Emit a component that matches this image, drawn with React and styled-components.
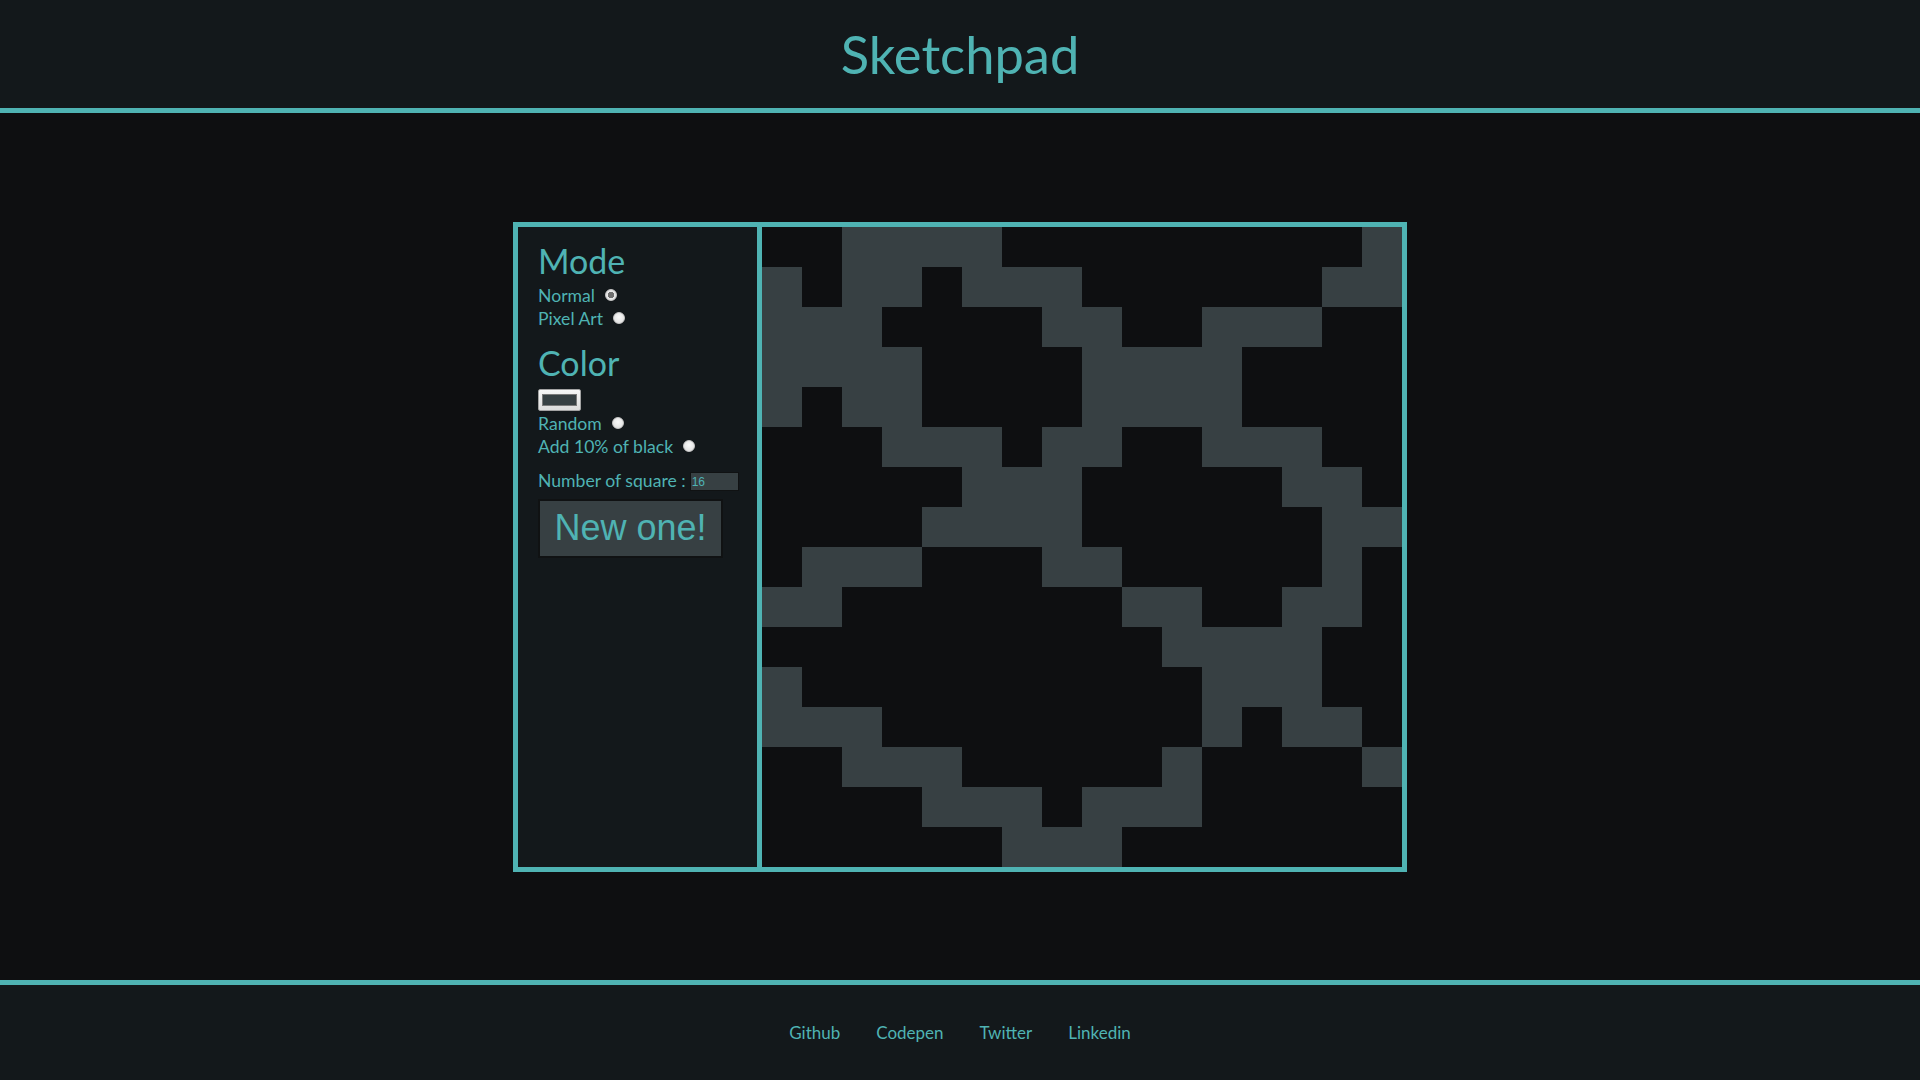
import React from "react";
import styled, { createGlobalStyle } from "styled-components";

const teal = "#4fb3b3";
const dark = "#13181b";
const cell = "#374043";

const GlobalStyle = createGlobalStyle`
    html, body {
        margin: 0;
        padding: 0;
        background: #0e0f11;
        font-family: Lato, "Open Sans", sans-serif;
        color: ${teal};
    }
`;

const Page = styled.div`
    display: flex;
    flex-direction: column;
    min-height: 100vh;
`;

const Header = styled.header`
    height: 108px;
    background: ${dark};
    border-bottom: 5px solid ${teal};
    display: flex;
    align-items: center;
    justify-content: center;
`;

const Title = styled.h1`
    margin: 0;
    font-size: 52.5px;
    font-weight: 400;
    line-height: 1;
    color: ${teal};
`;

const Main = styled.main`
    flex: 1;
    display: flex;
    align-items: center;
    justify-content: center;
`;

const Board = styled.div`
    display: flex;
    border: 5px solid ${teal};
`;

const Panel = styled.aside`
    width: 199px;
    padding: 14px 20px 0;
    background: ${dark};
    border-right: 5px solid ${teal};
`;

const Heading = styled.h2`
    margin: ${props => props.$first ? "0" : "13px 0 0"};
    font-size: 34px;
    font-weight: 400;
    line-height: 40px;
`;

const Options = styled.div`
    margin-top: 3px;
`;

const Option = styled.label`
    display: flex;
    align-items: center;
    height: 23px;
    font-size: 17.6px;
    white-space: nowrap;
`;

const Radio = styled.input.attrs({ type: "radio" })`
    appearance: none;
    -webkit-appearance: none;
    width: 12px;
    height: 12px;
    margin: 0 0 0 10px;
    border-radius: 50%;
    border: 1px solid #c9c9c9;
    background: radial-gradient(circle at 50% 40%, #fafafa 0%, #e4e4e4 70%, #d2d2d2 100%);
    box-sizing: border-box;

    &:checked {
        background: radial-gradient(circle, #6f6f6f 0 3px, #e9e9e9 3.5px, #d6d6d6 100%);
    }
`;

const ColorPick = styled.input.attrs({ type: "color" })`
    display: block;
    margin: 6px 0 1px;
    width: 43px;
    height: 22px;
    padding: 0;
    box-sizing: border-box;
    border: 1px solid #a3a3a3;
    border-radius: 2px;
    background: linear-gradient(#f7f7f7, #dcdcdc);

    &::-webkit-color-swatch-wrapper {
        padding: 4px 3px;
    }
    &::-webkit-color-swatch {
        border: 1px solid #7a7a7a;
        border-radius: 0;
    }
`;

const SizeRow = styled.label`
    display: flex;
    align-items: center;
    height: 23px;
    margin-top: 11px;
    font-size: 17.6px;
    white-space: nowrap;
`;

const SizeInput = styled.input`
    flex-shrink: 0;
    width: 49px;
    height: 19px;
    margin: 3px 0 0 4px;
    padding: 0 1px;
    box-sizing: border-box;
    border: 1px solid #101213;
    background: ${cell};
    color: ${teal};
    font: 12px "Liberation Sans", Arial, sans-serif;
    outline: none;
    -moz-appearance: textfield;

    &::-webkit-inner-spin-button,
    &::-webkit-outer-spin-button {
        -webkit-appearance: none;
        margin: 0;
    }
`;

const NewButton = styled.button`
    display: block;
    margin-top: 7px;
    width: 185px;
    height: 59px;
    padding: 0;
    background: ${cell};
    border: 2px solid #101213;
    color: ${teal};
    font: 36px "Liberation Sans", Arial, sans-serif;
    cursor: pointer;
`;

const Grid = styled.div`
    display: grid;
    grid-template-columns: repeat(16, 40px);
    grid-auto-rows: 40px;
    background: #0e0f11;
`;

const Cell = styled.div`
    background: ${props => props.$on ? cell : "#0e0f11"};
`;

const Footer = styled.footer`
    height: 95px;
    background: ${dark};
    border-top: 5px solid ${teal};
    display: flex;
    align-items: center;
    justify-content: center;
    gap: 36px;
`;

const Link = styled.a`
    color: ${teal};
    text-decoration: none;
    font-size: 17px;
`;

const pattern = [
    "0011110000000001",
    "1011011100000011",
    "1110000110011100",
    "1111000011110000",
    "1011000011110000",
    "0001110110011100",
    "0000011100000110",
    "0000111100000011",
    "0111000110000010",
    "1100000001100110",
    "0000000000111100",
    "1000000000011100",
    "1110000000010110",
    "0011100000100001",
    "0000111011100000",
    "0000001110000000",
];

export default function App() {
    return <Page>
        <GlobalStyle />
        <Header>
            <Title>Sketchpad</Title>
        </Header>
        <Main>
            <Board>
                <Panel>
                    <Heading $first>Mode</Heading>
                    <Options>
                        <Option>Normal<Radio name="mode" defaultChecked /></Option>
                        <Option>Pixel Art<Radio name="mode" /></Option>
                    </Options>
                    <Heading>Color</Heading>
                    <ColorPick defaultValue="#374043" />
                    <Option>Random<Radio name="random" /></Option>
                    <Option>Add 10% of black<Radio name="black" /></Option>
                    <SizeRow>
                        Number of square :
                        <SizeInput type="number" defaultValue="16" />
                    </SizeRow>
                    <NewButton>New one!</NewButton>
                </Panel>
                <Grid>
                    {pattern.map((row, r) => row.split("").map((v, c) =>
                        <Cell key={r + "-" + c} $on={v === "1"} />
                    ))}
                </Grid>
            </Board>
        </Main>
        <Footer>
            <Link href="#">Github</Link>
            <Link href="#">Codepen</Link>
            <Link href="#">Twitter</Link>
            <Link href="#">Linkedin</Link>
        </Footer>
    </Page>;
}
